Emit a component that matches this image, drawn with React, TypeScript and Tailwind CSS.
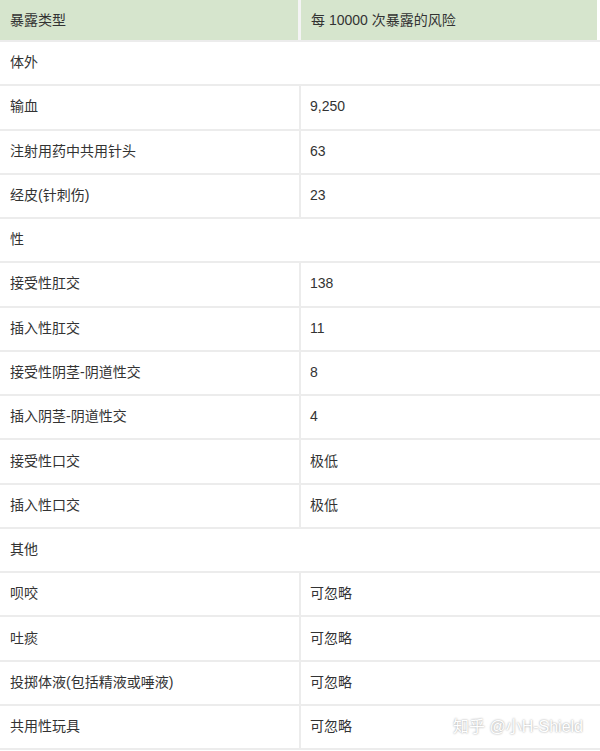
const rows: { a: string; b?: string }[] = [
  { a: "体外" },
  { a: "输血", b: "9,250" },
  { a: "注射用药中共用针头", b: "63" },
  { a: "经皮(针刺伤)", b: "23" },
  { a: "性" },
  { a: "接受性肛交", b: "138" },
  { a: "插入性肛交", b: "11" },
  { a: "接受性阴茎-阴道性交", b: "8" },
  { a: "插入阴茎-阴道性交", b: "4" },
  { a: "接受性口交", b: "极低" },
  { a: "插入性口交", b: "极低" },
  { a: "其他" },
  { a: "呗咬", b: "可忽略" },
  { a: "吐痰", b: "可忽略" },
  { a: "投掷体液(包括精液或唾液)", b: "可忽略" },
  { a: "共用性玩具", b: "可忽略" },
];

export default function App() {
  return (
    <div
      className="relative w-[600px] h-[751px] overflow-hidden bg-white text-[14px] text-[#333]"
      style={{ fontFamily: '"Liberation Sans", "Noto Sans CJK SC", sans-serif' }}
    >
      {/* Header */}
      <div className="flex h-[42px] border-b-2 border-[#ececec] pr-[3px]">
        <div className="w-[298px] flex items-center pl-[10px] bg-[#d6e5cd]">暴露类型</div>
        <div className="w-[3px] bg-[#f4f4f4]" />
        <div className="flex-1 flex items-center pl-[10px] bg-[#d6e5cd]">每 10000 次暴露的风险</div>
      </div>

      {rows.map((r, i) => (
        <div key={i} className="flex h-[44.27px] border-b-2 border-[#ececec]">
          {r.b === undefined ? (
            <div className="flex-1 flex items-center pl-[10px] pb-[1px]">{r.a}</div>
          ) : (
            <>
              <div className="w-[301px] flex items-center pl-[10px] pb-[1px] border-r-2 border-[#ececec]">{r.a}</div>
              <div className="flex-1 flex items-center pl-[9px] pb-[1px]">{r.b}</div>
            </>
          )}
        </div>
      ))}

      {/* Watermark */}
      <div
        className="absolute right-[17px] bottom-[12px] text-[16px] text-white"
        style={{ textShadow: "0 0 2px rgba(0,0,0,0.45)" }}
      >
        知乎 @小H-Shield
      </div>
    </div>
  );
}
